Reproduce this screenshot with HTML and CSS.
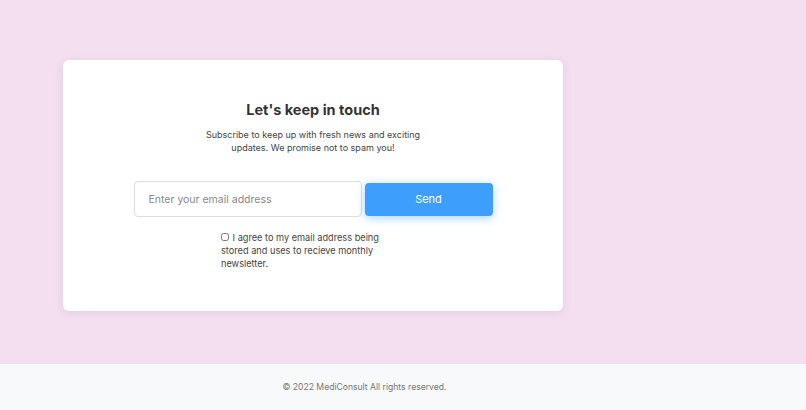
FILE: index.html
```html
<!DOCTYPE html>
<html lang="en">
<head>
    <meta charset="UTF-8">
    <meta name="viewport" content="width=device-width, initial-scale=1.0">
    <title>MediConsult - Newsletter</title>
    <link rel="stylesheet" href="styles.css">
</head>
<body>
    <section class="newsletter">
        <div class="card">
            <h2>Let's keep in touch</h2>
            <p class="lead">Subscribe to keep up with fresh news and exciting updates. We promise not to spam you!</p>

            <form class="subscribe" onsubmit="return false;">
                <input type="email" class="email" placeholder="Enter your email address">
                <button type="submit" class="send-btn">Send</button>
            </form>

            <label class="agree">
                <input type="checkbox">
                I agree to my email address being stored and uses to recieve monthly newsletter.
            </label>
        </div>
    </section>

    <footer class="footer">
        <p>© 2022 MediConsult All rights reserved.</p>
    </footer>
</body>
</html>
```

FILE: styles.css
```css
* {
    box-sizing: border-box;
}
body {
    margin: 0;
    font-family: Inter, "Noto Sans", sans-serif;
    background: #f3dff0;
}
.newsletter {
    height: 364px;
    padding: 60px 0 0 63px;
}
.card {
    width: 500px;
    height: 251px;
    background: #fff;
    border-radius: 6px;
    box-shadow: 0 2px 8px rgba(120, 80, 120, 0.12);
    padding-top: 39px;
    display: flex;
    flex-direction: column;
    align-items: center;
}
h2 {
    margin: 0;
    font-size: 14.5px;
    line-height: 22px;
    font-weight: 700;
    color: #333;
}
.lead {
    width: 226px;
    margin: 7px 0 0;
    font-size: 9px;
    line-height: 13px;
    color: #444;
    text-align: center;
}
.subscribe {
    display: flex;
    align-items: center;
    gap: 3px;
    margin-top: 27px;
}
.email {
    width: 228px;
    height: 36px;
    border: 1px solid #dedede;
    border-radius: 4px;
    padding: 0 14px;
    font-family: inherit;
    font-size: 10.5px;
    color: #333;
    outline: none;
}
.email::placeholder {
    color: #888;
}
.send-btn {
    width: 128px;
    height: 33px;
    border: none;
    border-radius: 4px;
    background: #3d9efc;
    color: #fff;
    font-family: inherit;
    font-size: 11px;
    box-shadow: 0 2px 10px rgba(61, 158, 252, 0.45);
    cursor: pointer;
}
.agree {
    width: 184px;
    margin-top: 15px;
    font-size: 9.2px;
    line-height: 12.8px;
    color: #444;
}
.agree input {
    width: 8px;
    height: 8px;
    margin: 0 1px 0 0;
    vertical-align: 0;
}
.footer {
    height: 46px;
    padding-right: 77px;
    background: #f8f9fb;
    display: flex;
    align-items: center;
    justify-content: center;
}
.footer p {
    margin: 0;
    font-size: 8.6px;
    color: #777;
}
```
